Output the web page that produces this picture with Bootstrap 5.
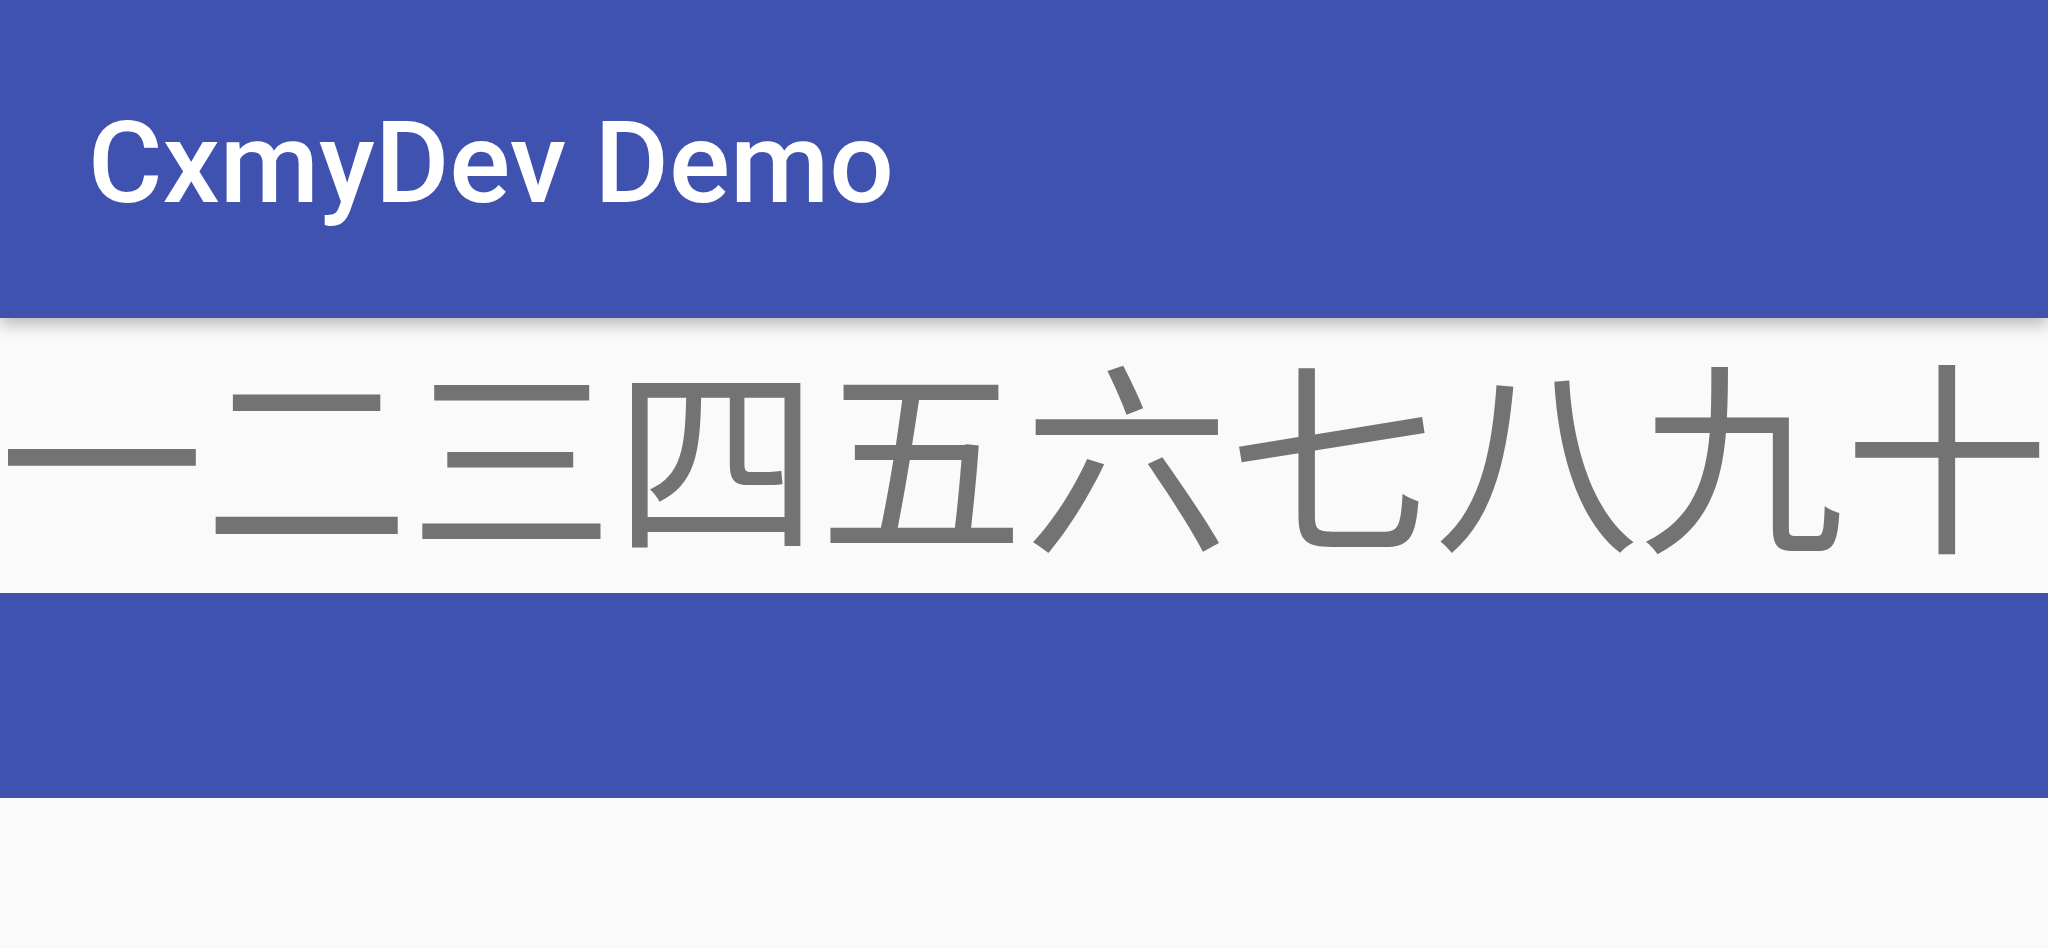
<!DOCTYPE html>
<html lang="zh-CN">
<head>
<meta charset="utf-8">
<meta name="viewport" content="width=device-width, initial-scale=1">
<title>CxmyDev Demo</title>
<link href="https://cdn.jsdelivr.net/npm/bootstrap@5.3.0/dist/css/bootstrap.min.css" rel="stylesheet">
<style>
:root { --indigo: #4052b0; }
body { background: #fafafa; font-family: Roboto, "Noto Sans CJK SC", sans-serif; }
.app-bar { background: var(--indigo); min-height: 318px; padding: 8px 88px 0; box-shadow: 0 6px 16px rgba(0,0,0,.28); }
.app-title { color: #fff; font-size: 114px; line-height: 136px; font-weight: 500; }
.numerals { color: #737373; font-family: "Noto Sans CJK SC", sans-serif; font-size: 205px; line-height: 259px; padding-bottom: 16px; }
.color-band { background: var(--indigo); height: 205px; }
</style>
</head>
<body class="overflow-x-hidden">
<header class="app-bar d-flex align-items-center">
<h1 class="app-title m-0 text-nowrap">CxmyDev Demo</h1>
</header>
<main>
<p class="numerals m-0 d-flex justify-content-center text-nowrap">一二三四五六七八九十</p>
<div class="color-band"></div>
</main>
<script src="https://cdn.jsdelivr.net/npm/bootstrap@5.3.0/dist/js/bootstrap.bundle.min.js"></script>
</body>
</html>
